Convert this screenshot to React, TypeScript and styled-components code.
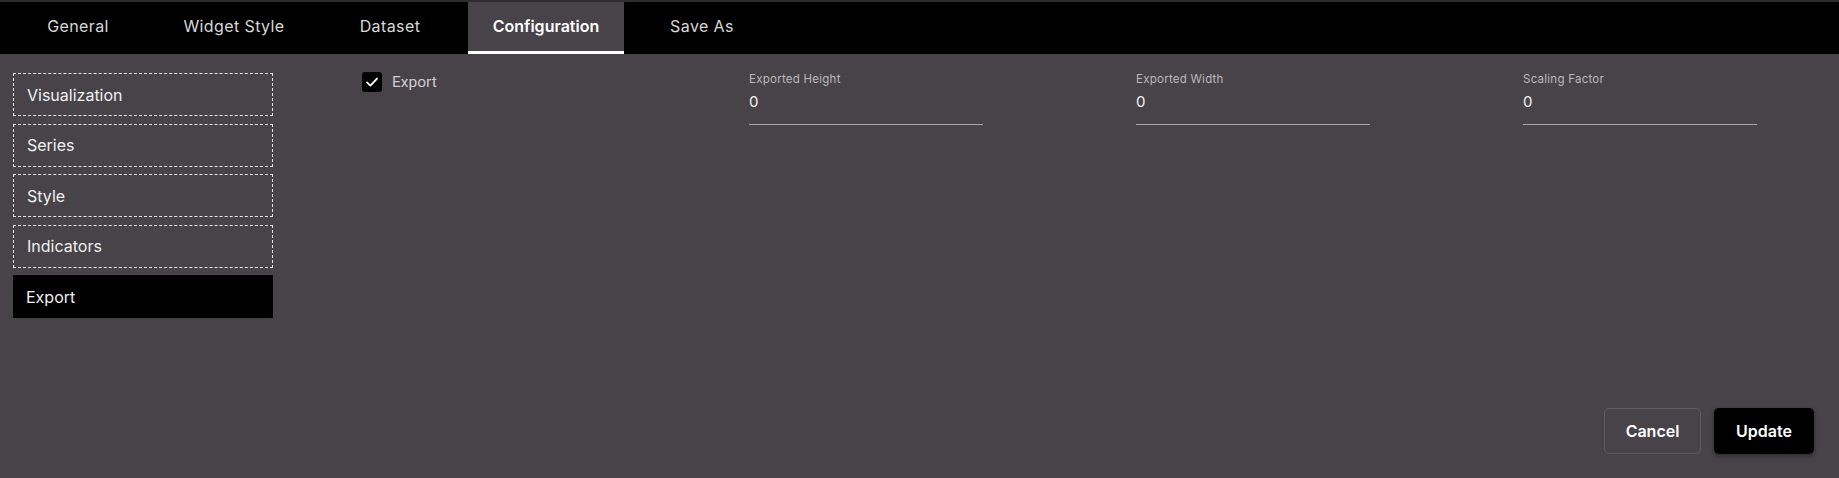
import React, { useState } from "react";
import styled, { createGlobalStyle } from "styled-components";

const tabs = ["General", "Widget Style", "Dataset", "Configuration", "Save As"];
const sections = ["Visualization", "Series", "Style", "Indicators", "Export"];
const fields = ["Exported Height", "Exported Width", "Scaling Factor"];

const App = () => {
  const [activeTab, setActiveTab] = useState("Configuration");
  const [activeSection, setActiveSection] = useState("Export");
  const [exportOn, setExportOn] = useState(true);

  return (
    <>
      <GlobalStyle />
      <Page>
        <TabBar>
          {tabs.map((tab) => (
            <Tab key={tab} $active={tab === activeTab} onClick={() => setActiveTab(tab)}>
              {tab}
            </Tab>
          ))}
        </TabBar>
        <Main>
          <Body>
            <Sidebar>
              {sections.map((section) => (
                <SectionItem
                  key={section}
                  $active={section === activeSection}
                  onClick={() => setActiveSection(section)}
                >
                  {section}
                </SectionItem>
              ))}
            </Sidebar>
            <Content>
              <CheckRow onClick={() => setExportOn(!exportOn)}>
                <CheckBox $checked={exportOn}>
                  {exportOn && (
                    <svg width="14" height="14" viewBox="0 0 14 14">
                      <path
                        d="M2 7.4 L5.4 10.6 L12 3.6"
                        fill="none"
                        stroke="#fff"
                        strokeWidth="1.9"
                        strokeLinecap="round"
                        strokeLinejoin="round"
                      />
                    </svg>
                  )}
                </CheckBox>
                <CheckLabel>Export</CheckLabel>
              </CheckRow>
              {fields.map((field) => (
                <Field key={field}>
                  <FieldLabel>{field}</FieldLabel>
                  <FieldInput defaultValue="0" />
                </Field>
              ))}
            </Content>
          </Body>
          <Footer>
            <CancelButton>Cancel</CancelButton>
            <UpdateButton>Update</UpdateButton>
          </Footer>
        </Main>
      </Page>
    </>
  );
};

export default App;

const GlobalStyle = createGlobalStyle`
  body {
    margin: 0;
    background: #474349;
    font-family: Inter, "Noto Sans", sans-serif;
  }
`;

const Page = styled.div`
  height: 100vh;
  display: flex;
  flex-direction: column;
  background: #474349;
  overflow: hidden;
`;

const TabBar = styled.div`
  display: flex;
  height: 52px;
  background: #000;
  border-top: 2px solid #2d2c2f;
`;

const Tab = styled.div<{ $active?: boolean }>`
  width: 156px;
  display: flex;
  align-items: center;
  justify-content: center;
  box-sizing: border-box;
  padding-bottom: ${(p) => (p.$active ? "2px" : "4px")};
  font-size: 16px;
  letter-spacing: ${(p) => (p.$active ? "0" : "0.4px")};
  font-weight: ${(p) => (p.$active ? 600 : 400)};
  color: ${(p) => (p.$active ? "#fff" : "#d8d8d8")};
  background: ${(p) => (p.$active ? "#474349" : "transparent")};
  border-bottom: ${(p) => (p.$active ? "3px solid #fff" : "none")};
  cursor: pointer;
`;

const Main = styled.div`
  flex: 1;
  display: flex;
  flex-direction: column;
`;

const Body = styled.div`
  flex: 1;
  display: flex;
`;

const Sidebar = styled.div`
  flex: 0 0 260px;
  margin-left: 13px;
  padding-top: 19px;
  display: flex;
  flex-direction: column;
  gap: 7.5px;
`;

const SectionItem = styled.div<{ $active?: boolean }>`
  height: 43px;
  box-sizing: border-box;
  display: flex;
  align-items: center;
  padding-left: ${(p) => (p.$active ? "13px" : "13px")};
  font-size: 16px;
  color: #f0f0f0;
  background: ${(p) => (p.$active ? "#000" : "transparent")};
  border: ${(p) => (p.$active ? "none" : "1px dashed #e8e8e8")};
  cursor: pointer;
`;

const Content = styled.div`
  flex: 1;
  min-width: 0;
  padding-left: 89px;
  padding-top: 17px;
  display: grid;
  grid-template-columns: repeat(3, 387px) 1fr;
  align-items: start;
  align-content: start;
`;

const CheckRow = styled.div`
  display: flex;
  align-items: center;
  gap: 10px;
  margin-top: 1px;
  cursor: pointer;
`;

const CheckBox = styled.div<{ $checked?: boolean }>`
  width: 20px;
  height: 20px;
  border-radius: 3px;
  background: ${(p) => (p.$checked ? "#000" : "transparent")};
  border: ${(p) => (p.$checked ? "none" : "1px solid #ccc")};
  display: grid;
  place-items: center;
`;

const CheckLabel = styled.span`
  font-family: Roboto, sans-serif;
  font-size: 15.5px;
  color: #cfcbd0;
`;

const Field = styled.div`
  width: 234px;
  display: flex;
  flex-direction: column;
`;

const FieldLabel = styled.label`
  font-size: 11.5px;
  letter-spacing: 0.25px;
  line-height: 16px;
  color: #bcb7bd;
`;

const FieldInput = styled.input`
  height: 38px;
  box-sizing: border-box;
  padding: 0 0 8px 0;
  background: transparent;
  border: none;
  border-bottom: 1px solid #aaa6ab;
  outline: none;
  font-family: Inter, sans-serif;
  font-size: 15px;
  color: #f2f2f2;
`;

const Footer = styled.div`
  display: flex;
  justify-content: flex-end;
  gap: 13px;
  padding: 0 25px 24px 0;
`;

const ButtonBase = styled.button`
  height: 46px;
  border-radius: 5px;
  font-family: Inter, sans-serif;
  font-size: 16px;
  font-weight: 600;
  color: #fff;
  cursor: pointer;
`;

const CancelButton = styled(ButtonBase)`
  width: 97px;
  background: transparent;
  border: 1px solid #5f5b61;
`;

const UpdateButton = styled(ButtonBase)`
  width: 100px;
  background: #000;
  border: none;
  box-shadow: 0 2px 4px rgba(0, 0, 0, 0.35);
`;
